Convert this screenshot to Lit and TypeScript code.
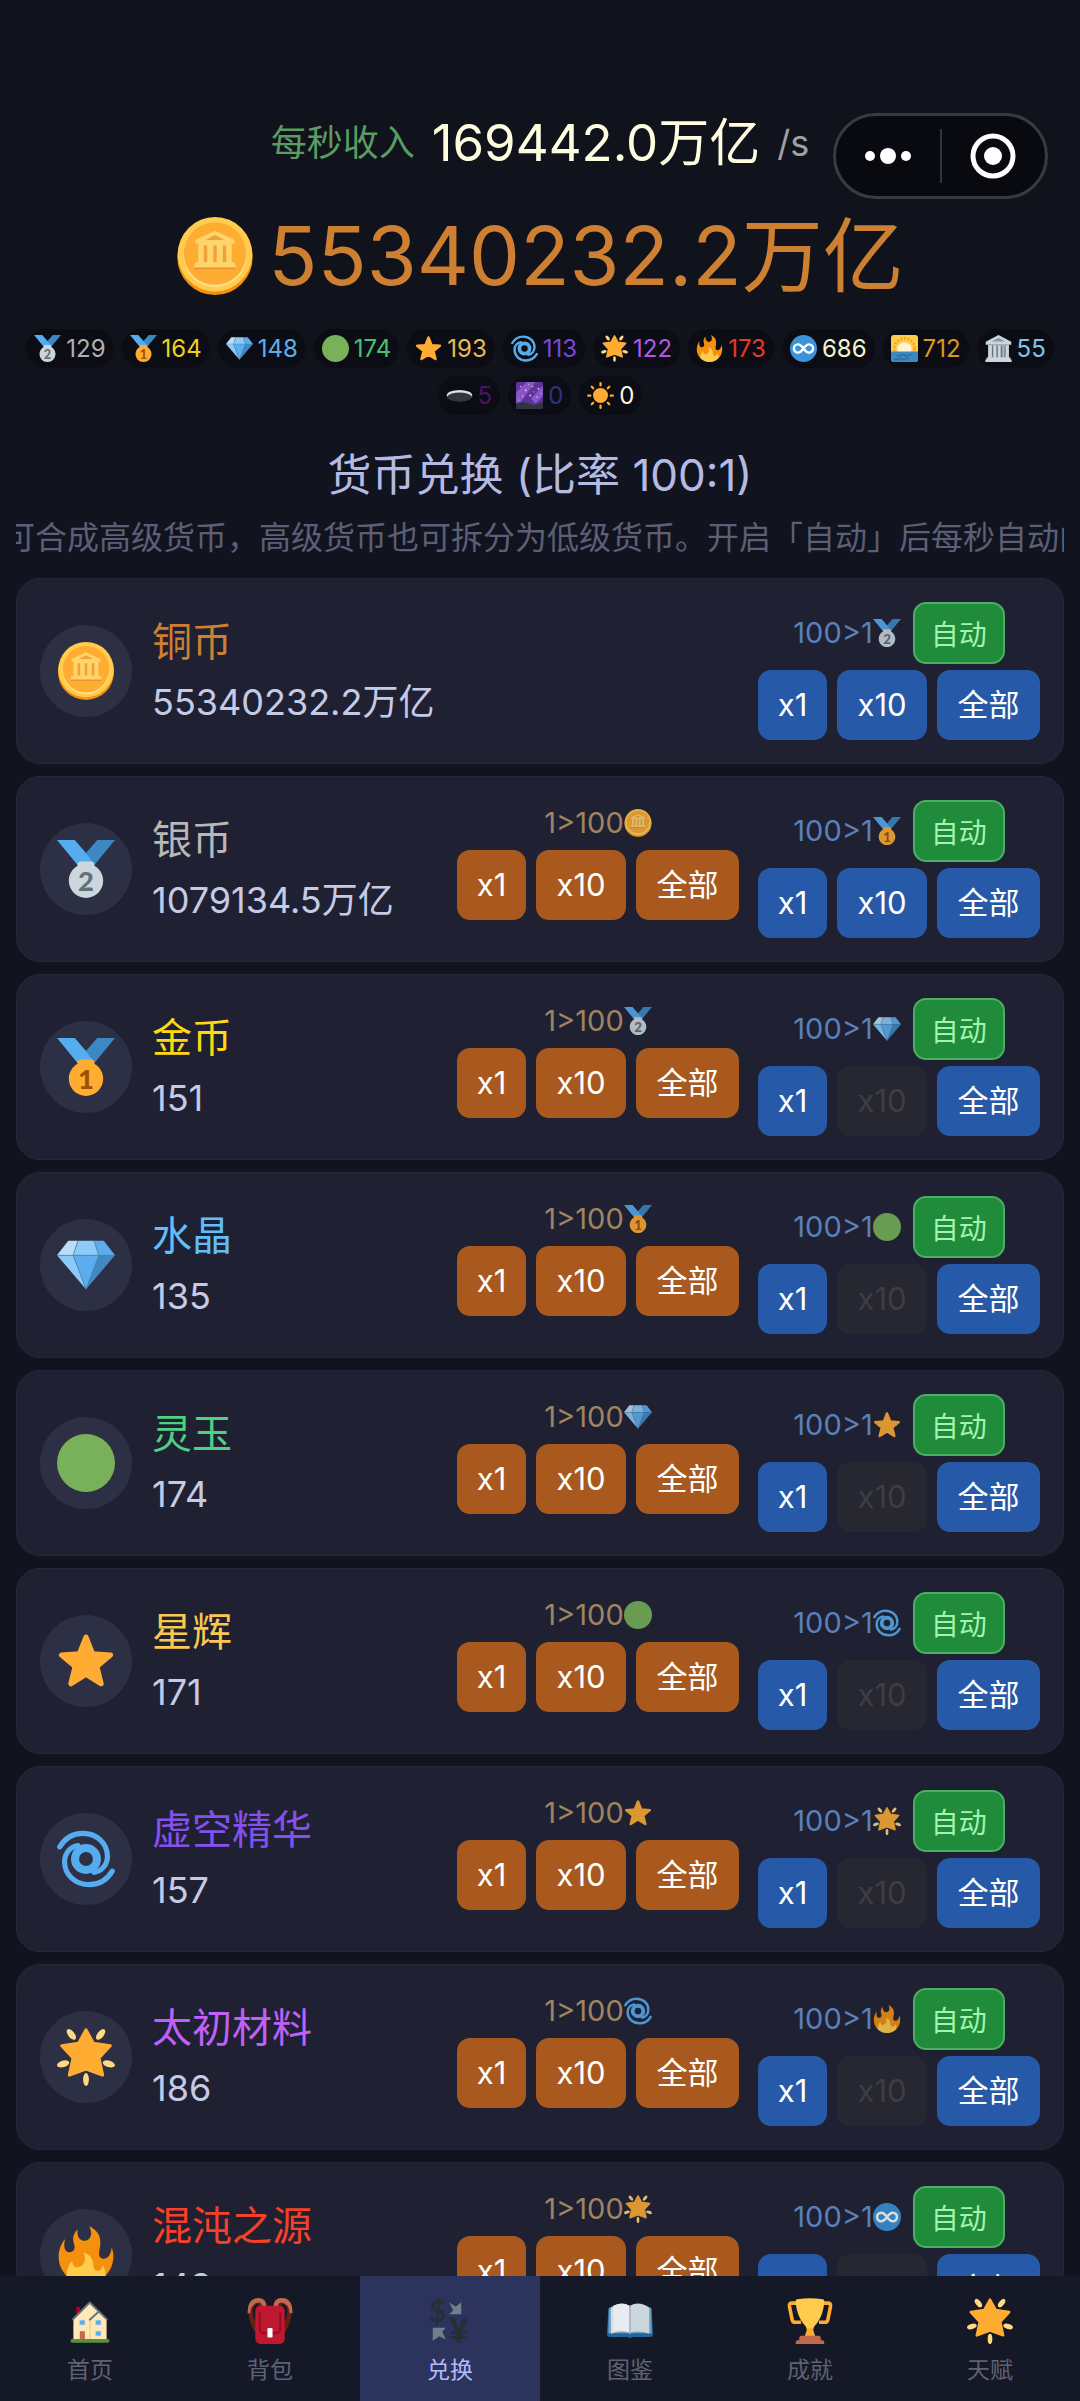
import { LitElement, html, css, svg, nothing, SVGTemplateResult } from 'lit';
import { customElement, property } from 'lit/decorators.js';

interface Currency {
  name: string;
  icon: string;
  color: string;
  amount: string;
  canTen: boolean;
}

const star = 'M18 3.2l4.1 10.3 11.1.8-8.5 7.1 2.7 10.7-9.4-5.9-9.4 5.9 2.7-10.7-8.5-7.1 11.1-.8z';
const ribbon = svg`
  <path fill="#55ACEE" d="M18 8l-7-8H0l14 17 11.521-4.75z"/>
  <path fill="#3B88C3" d="M25 0l-7 8 5.39 7.312 1.227-1.489L36 0z"/>`;
const medalBody =
  'M23.205 16.026c.08-.217.131-.448.131-.693 0-1.104-.896-2-2-2h-6.667c-1.105 0-2 .896-2 2 0 .245.05.476.131.693-3.258 1.826-5.464 5.307-5.464 9.307C7.335 31.224 12.111 36 18.002 36s10.667-4.776 10.667-10.667c0-4-2.206-7.481-5.464-9.307z';
const cycloneArm = 'M1.7 10.5C5 5 10 2.1 16 2.1c9 0 15.3 6.4 15.3 14.2 0 5.200-3.300 9.200-8.300 10';

const icons: Record<string, SVGTemplateResult> = {
  coin: svg`
    <circle cx="18" cy="18.600" r="17.400" fill="#F4900C"/>
    <circle cx="18" cy="17.200" r="17.200" fill="#FFCC4D"/>
    <circle cx="18" cy="17.800" r="14.600" fill="#FFE08A"/>
    <circle cx="18" cy="16.900" r="14.400" fill="#FFAC33"/>
    <path fill="#E8912A" d="M8.500 22.500h19v1.600h-19z"/>
    <path fill="#FFD46B" d="M18 6.300l9 4.200v1.700h-1.300v8.800h1.300l.8 2.300H8.200l.8-2.300h1.300v-8.800H9v-1.700z"/>
    <path fill="#F0A238" d="M18 8.300l4.300 2.300h-8.600zM12.800 13.200h1.600v7.600h-1.600zM17.200 13.200h1.600v7.600h-1.600zM21.600 13.200h1.600v7.600h-1.600z"/>`,
  silver: svg`
    ${ribbon}
    <path fill="#CCD6DD" d="${medalBody}"/>
    <text class="mark" x="18" y="31.500" font-size="17" fill="#627077">2</text>`,
  gold: svg`
    ${ribbon}
    <path fill="#FFAC33" d="${medalBody}"/>
    <text class="mark" x="18" y="31.500" font-size="17" fill="#9E5200">1</text>`,
  gem: svg`
    <path fill="#BDDDF4" d="M13 3H7l-7 9h10z"/>
    <path fill="#5DADEC" d="M36 12l-7-9h-6l3 9z"/>
    <path fill="#4289C1" d="M26 12h10L18 33z"/>
    <path fill="#8CCAF7" d="M10 12H0l18 21zm3-9l-3 9h16l-3-9z"/>
    <path fill="#5DADEC" d="M18 33l-8-21h16z"/>
    <path fill="none" stroke="#4289C1" stroke-width=".5" d="M0 12h36M13 3l-3 9 8 21 8-21-3-9"/>`,
  jade: svg`<circle cx="18" cy="18" r="18" fill="#78B159"/>`,
  star: svg`<path fill="#FFAC33" stroke="#FFAC33" stroke-width="3.200" stroke-linejoin="round" d="${star}"/>`,
  cyclone: svg`
    <g fill="none" stroke="#55ACEE">
      <circle cx="18" cy="18" r="6.800" stroke-width="5"/>
      <path stroke-width="3.200" stroke-linecap="round" d="${cycloneArm}"/>
      <path stroke-width="3.200" stroke-linecap="round" transform="rotate(180 18 18)" d="${cycloneArm}"/>
    </g>`,
  glow: svg`
    <path fill="#FFAC33" stroke="#FFAC33" stroke-width="2" stroke-linejoin="round"
      d="M18 1.200l4.500 8.300 10.500 1.500-7 7.600 2.300 10.600L18 25.500 7.700 29.200 10 18.600 3 11l10.500-1.500z"/>
    <g fill="#FFD983">
      <ellipse cx="8.900" cy="4" rx="2" ry="3.900" transform="rotate(-38 8.900 4)"/>
      <ellipse cx="27.100" cy="4" rx="2" ry="3.900" transform="rotate(38 27.100 4)"/>
      <ellipse cx="3.800" cy="22.300" rx="3.900" ry="2" transform="rotate(-16 3.800 22.300)"/>
      <ellipse cx="32.200" cy="22.300" rx="3.900" ry="2" transform="rotate(16 32.200 22.300)"/>
      <ellipse cx="18" cy="32" rx="1.800" ry="4"/>
    </g>`,
  fire: svg`
    <path fill="#F4900C" d="M35 19c0-2.062-.367-4.039-1.040-5.868-.46 5.389-3.333 8.157-6.335 6.868-2.812-1.208-.917-5.917-.777-8.164.236-3.809-.012-8.169-6.931-11.794 2.875 5.500.333 8.917-2.333 9.125-2.958.231-5.667-2.542-4.667-7.042-3.238 2.386-3.332 6.402-2.333 9 1.042 2.708-.042 4.958-2.583 5.208-2.840.280-4.418-3.041-2.963-8.333C2.520 10.965 1 14.805 1 19c0 9.389 7.611 17 17 17s17-7.611 17-17z"/>
    <path fill="#FFCC4D" d="M28.394 23.999c.148 3.084-2.561 4.293-4.019 3.709-2.106-.843-1.541-2.291-2.083-5.291s-2.625-5.083-5.708-6c2.250 6.333-1.247 8.667-3.080 9.084-1.872.426-3.753-.001-3.968-4.007C7.352 23.668 6 26.676 6 30c0 .368.023.73.055 1.090C9.125 34.124 13.342 36 18 36s8.875-1.876 11.945-4.910c.032-.360.055-.722.055-1.090 0-2.187-.584-4.236-1.606-6.001z"/>`,
  infinity: svg`
    <circle cx="18" cy="18" r="18" fill="#3B94D9"/>
    <path fill="none" stroke="#fff" stroke-width="3.200" stroke-linecap="round"
      d="M18 18c-2.500-3.500-4.500-5.500-7.300-5.500a5.500 5.500 0 0 0 0 11c2.800 0 4.800-2 7.300-5.500s4.500-5.500 7.300-5.500a5.500 5.500 0 0 1 0 11c-2.800 0-4.800-2-7.300-5.500z"/>`,
  sunrise: svg`
    <rect width="36" height="36" rx="4" fill="#FFCC4D"/>
    <circle cx="18" cy="18" r="13.500" fill="none" stroke="#F4A62A" stroke-width="3.500" stroke-dasharray="2.600 2.200"/>
    <circle cx="18" cy="19" r="9.500" fill="#FFF3D2"/>
    <path fill="#3B88C3" d="M0 22h36v10a4 4 0 0 1-4 4H4a4 4 0 0 1-4-4z"/>
    <path fill="none" stroke="#2A6797" stroke-width="1.500" d="M8 27q2.500 2 5 0t5 0 5 0 5 0M4 32q2.500 2 5 0t5 0 5 0 5 0"/>`,
  temple: svg`
    <path fill="#AAB8C2" d="M4 13h28v18H4z"/>
    <path fill="#66757F" d="M9 14h2v16H9zM15 14h2v16h-2zM21 14h2v16h-2zM26 14h2v16h-2z"/>
    <path fill="#CCD6DD" d="M18 0l17 9v4H1V9zM5 14h4v16H5zM11.500 14h3.500v16h-3.500zM17.500 14h3v16h-3zM27.500 14h4v16h-4zM2 30h32v2.500h1.500V36H.5v-3.500H2z"/>
    <path fill="#8899A6" d="M18 3.500l9 5H9z"/>`,
  hole: svg`
    <ellipse cx="18" cy="18" rx="17" ry="7.500" fill="#DCE4E9"/>
    <path fill="#31373D" d="M1 19.500q5-5.500 17-5.500t17 5.500c-1 4-8 6.500-17 6.500S2 23.500 1 19.500z"/>`,
  galaxy: svg`
    <rect width="36" height="36" rx="2" fill="#5B359A"/>
    <path fill="#8A55C8" d="M0 14L14 0h12L6 27l-6 1zM20 22L36 5v14L26 29z"/>
    <path fill="#30343F" d="M0 29q9-4 18 0t18-3v8a2 2 0 0 1-2 2H2a2 2 0 0 1-2-2z"/>
    <g fill="#E3C8F7">
      <circle cx="6" cy="6" r="1"/><circle cx="13" cy="11" r="1.200"/><circle cx="22" cy="6" r="1"/>
      <circle cx="30" cy="9" r="1.200"/><circle cx="9" cy="19" r="1"/><circle cx="19" cy="18" r="1.200"/>
      <circle cx="28" cy="20" r="1"/><circle cx="17" cy="3" r=".8"/><circle cx="4" cy="24" r=".8"/>
      <circle cx="33" cy="15" r=".8"/><circle cx="24" cy="13" r=".8"/>
    </g>`,
  sun: svg`
    <circle cx="18" cy="18" r="10" fill="#FFAC33"/>
    <path stroke="#FFAC33" stroke-width="3" stroke-linecap="round"
      d="M18 1.500v3M18 31.500v3M1.500 18h3M31.500 18h3M6.300 6.300l2 2M27.700 27.700l2 2M6.300 29.700l2-2M27.700 8.300l2-2"/>`,
  home: svg`
    <path fill="#A0041E" d="M7 7h3.200v8H7z"/>
    <path fill="#FFE8B6" d="M5 17L17.800 4 31 17v16H5z"/>
    <path fill="#F3D28E" d="M17.500 17h1.200v15h-1.200z"/>
    <path fill="none" stroke="#66757F" stroke-width="1.500" stroke-linecap="round" stroke-linejoin="round" d="M4.600 16.700L17.800 3.500 31.200 16.700M24.500 11l-6.700 6"/>
    <path fill="#55ACEE" stroke="#9CC9E8" stroke-width=".5" d="M10 17.500h4v3.500h-4zM22.500 17.500h4v3.500h-4zM22.500 26h4v3.500h-4z"/>
    <path fill="#C1694F" d="M10 26h4v6.500h-4z"/>
    <rect x="2.700" y="32" width="30.600" height="3" rx="1.500" fill="#5C913B"/>`,
  bag: svg`
    <path fill="#662113" d="M1 8q0-6 6-7.500L12 4 9 30Q1 22 1 8zM35 8q0-6-6-7.500L24 4l3 26q8-8 8-22z"/>
    <path fill="#151826" d="M4.500 10Q5 5 9 4.500L8 20Q4.500 16 4.500 10zM31.500 10Q31 5 27 4.500L28 20q3.500-4 3.500-10z"/>
    <path fill="#C1694F" d="M.5 12Q0 0 9 0q6 0 6.500 7H12Q11.500 3.500 9 3.500 3.500 4 2.500 12zM35.500 12Q36 0 27 0q-6 0-6.500 7H24q.5-3.500 3-3.500 5.500.5 6.500 8.500z"/>
    <rect x="6.500" y="6" width="23" height="30" rx="4" fill="#BE1931"/>
    <path fill="none" stroke="#9A0A23" stroke-width="1.500" d="M10 11v13q0 3.500 3.500 3.500h9q3.500 0 3.500-3.500V11"/>
    <rect x="16" y="23.500" width="4" height="7.500" rx="1" fill="#fff"/>`,
  exchange: svg`
    <text class="mark" x="8.500" y="18.500" font-size="23" fill="#272E36">$</text>
    <text class="mark" x="25" y="35.500" font-size="28" fill="#272E36">¥</text>
    <path fill="#6F7F8B" d="M17.300 3.400l5.100 3.400 4.400-3.400v9.400h-9.500l3.300-3.200zM4.500 23.200h10.100L12 26.500l2.600 6L9.700 30l-5.200 3.400z"/>`,
  book: svg`
    <path fill="#226699" d="M1 9q0-2 2-2h30q2 0 2 2l1 19q0 2.500-2.500 2.500H20l-2 1-2-1H2.500Q0 30.500 0 28z"/>
    <path fill="#6FA0C4" d="M1.500 8h33l.5 19.500H1z"/>
    <path fill="#D5DEE5" d="M3 7.500Q11 2 17.500 6v21Q10 25 3 28z"/>
    <path fill="#E6ECF1" d="M5 6Q12 3 17.500 6v21Q10 24 5 26z"/>
    <path fill="#CCD6DD" d="M33 7.500Q25 2 18 6v21Q26 25 33 28z"/>
    <path fill="#AAB8C2" d="M17.500 6h1.200v22h-1.200z"/>`,
  trophy: svg`
    <path fill="none" stroke="#FFAC33" stroke-width="2.800" stroke-linejoin="round" d="M10 4H3.500Q1.500 4 2 7l2 10q.5 2 2.500 2H11M26 4h6.500q2 0 1.500 3l-2 10q-.5 2-2.500 2H25"/>
    <path fill="#FFAC33" d="M14 20h8l-1.500 5 1.800 5.500h-8.600l1.800-5.500z"/>
    <path fill="#FFCC4D" d="M8 1q10-1.500 20 0 1.500 0 1.200 2c-.6 9-4.200 16-8.200 19.500-2 1.800-4 1.800-6 0C11 19 7.400 12 6.800 3 6.700 1 8 1 8 1z"/>
    <path fill="#C1694F" d="M11 29.500h14q1.500 0 1.500 3.500H28q1.200 0 1.200 3H6.800q0-3 1.200-3h1.500q0-3.500 1.500-3.500z"/>`,
};

const icon = (name: string) => html`<svg class="icon" viewBox="0 0 36 36" aria-hidden="true">${icons[name]}</svg>`;

const iconStyles = css`
  .icon {
    display: block;
    flex: none;
    overflow: visible;
  }
  .mark {
    font-family: Lato, sans-serif;
    font-weight: 900;
    text-anchor: middle;
  }
`;

const currencies: Currency[] = [
  { name: '铜币', icon: 'coin', color: '#cd7f32', amount: '55340232.2万亿', canTen: true },
  { name: '银币', icon: 'silver', color: '#b8b8b8', amount: '1079134.5万亿', canTen: true },
  { name: '金币', icon: 'gold', color: '#ffd814', amount: '151', canTen: false },
  { name: '水晶', icon: 'gem', color: '#62bef8', amount: '135', canTen: false },
  { name: '灵玉', icon: 'jade', color: '#50d080', amount: '174', canTen: false },
  { name: '星辉', icon: 'star', color: '#f8c850', amount: '171', canTen: false },
  { name: '虚空精华', icon: 'cyclone', color: '#8450ee', amount: '157', canTen: false },
  { name: '太初材料', icon: 'glow', color: '#c060f8', amount: '186', canTen: false },
  { name: '混沌之源', icon: 'fire', color: '#f84028', amount: '149', canTen: false },
  { name: '无限', icon: 'infinity', color: '#f8f8d8', amount: '686', canTen: false },
];

const wallet = [
  { icon: 'silver', color: '#b0b0b4', count: 129 },
  { icon: 'gold', color: '#ecd01c', count: 164 },
  { icon: 'gem', color: '#5cb0e8', count: 148 },
  { icon: 'jade', color: '#48c070', count: 174 },
  { icon: 'star', color: '#e8bc50', count: 193 },
  { icon: 'cyclone', color: '#7848dc', count: 113 },
  { icon: 'glow', color: '#b058e8', count: 122 },
  { icon: 'fire', color: '#e83828', count: 173 },
  { icon: 'infinity', color: '#f4f4cc', count: 686 },
  { icon: 'sunrise', color: '#dc9820', count: 712 },
  { icon: 'temple', color: '#80c4ec', count: 55 },
  { icon: 'hole', color: '#4c1268', count: 5 },
  { icon: 'galaxy', color: '#283488', count: 0 },
  { icon: 'sun', color: '#fcf8e4', count: 0 },
];

const tabs = [
  { icon: 'home', label: '首页' },
  { icon: 'bag', label: '背包' },
  { icon: 'exchange', label: '兑换' },
  { icon: 'book', label: '图鉴' },
  { icon: 'trophy', label: '成就' },
  { icon: 'glow', label: '天赋' },
];

@customElement('exchange-card')
export class ExchangeCard extends LitElement {
  @property({ attribute: false }) currency!: Currency;
  @property() lower = '';
  @property() upper = '';

  static styles = [
    iconStyles,
    css`
      :host {
        display: block;
        flex: none;
      }
      .card {
        display: flex;
        align-items: center;
        padding: 23px;
        background: #1f2132;
        border: 1px solid #26283a;
        border-radius: 24px;
      }
      .avatar {
        display: flex;
        align-items: center;
        justify-content: center;
        flex: none;
        width: 92px;
        height: 92px;
        margin-right: 20px;
        border-radius: 50%;
        background: #2d3044;
      }
      .avatar .icon {
        width: 58px;
        height: 58px;
      }
      .info {
        flex: 1;
        min-width: 0;
      }
      .name {
        margin: 0 0 6px;
        font-size: 40px;
        line-height: 56px;
        font-weight: 400;
      }
      .amount {
        font-size: 36px;
        line-height: 52px;
        color: #c5cae6;
        white-space: nowrap;
      }
      .trade {
        flex: none;
        margin-left: 19px;
      }
      .down {
        align-self: flex-start;
        padding-top: 4px;
      }
      .rate {
        display: flex;
        align-items: center;
        justify-content: center;
        font-size: 29px;
        line-height: 38px;
      }
      .rate .icon {
        width: 28px;
        height: 28px;
        opacity: 0.85;
      }
      .down .rate {
        margin-bottom: 8px;
        color: #a08462;
      }
      .up .rate {
        margin-bottom: 6px;
        color: #5a80bc;
      }
      .buttons {
        display: grid;
        grid-template-columns: 69px 90px 103px;
        gap: 10px;
      }
      button {
        margin: 0;
        padding: 0;
        border: 0;
        font-family: inherit;
        cursor: pointer;
      }
      .buttons button {
        height: 70px;
        border-radius: 13px;
        font-size: 31px;
        line-height: 40px;
        color: #fff;
        background: #2659a8;
      }
      .down .buttons button {
        background: #a9591d;
      }
      .buttons button:disabled {
        background: #262730;
        color: #3c3d46;
        cursor: default;
      }
      .auto {
        width: 92px;
        height: 62px;
        margin-left: 12px;
        border: 2px solid #48b060;
        border-radius: 13px;
        font-size: 28px;
        color: #a4f4b0;
        background: #1f8b3b;
      }
    `,
  ];

  render() {
    const { name, icon: image, color, amount, canTen } = this.currency;
    return html`
      <article class="card">
        <div class="avatar">${icon(image)}</div>
        <div class="info">
          <h2 class="name" style="color: ${color}">${name}</h2>
          <div class="amount">${amount}</div>
        </div>
        ${this.lower
          ? html`
              <div class="trade down">
                <div class="rate">1&gt;100${icon(this.lower)}</div>
                <div class="buttons">
                  <button>x1</button>
                  <button>x10</button>
                  <button>全部</button>
                </div>
              </div>
            `
          : nothing}
        <div class="trade up">
          <div class="rate">
            100&gt;1${icon(this.upper)}
            <button class="auto" aria-pressed="true">自动</button>
          </div>
          <div class="buttons">
            <button>x1</button>
            <button ?disabled=${!canTen}>x10</button>
            <button>全部</button>
          </div>
        </div>
      </article>
    `;
  }
}

@customElement('app-root')
export class AppRoot extends LitElement {
  static styles = [
    iconStyles,
    css`
      :host {
        display: flex;
        flex-direction: column;
        position: relative;
        height: 100vh;
        overflow: hidden;
        background: #11141f;
        color: #c5cae6;
        font-family: Inter, "Noto Sans CJK SC", sans-serif;
      }
      header {
        flex: none;
        padding: 107px 16px 12px;
        background: #10121c;
      }
      .income {
        display: flex;
        align-items: center;
        justify-content: center;
        gap: 17px;
        line-height: 72px;
      }
      .income-label {
        font-size: 36px;
        color: #5a9c62;
      }
      .income-value {
        font-size: 51px;
        color: #fffde0;
      }
      .income-unit {
        font-size: 36px;
        color: #a0a0a4;
      }
      .money {
        display: flex;
        align-items: center;
        justify-content: center;
        gap: 14px;
        margin: 27px 0 23px;
        font-size: 81px;
        line-height: 100px;
        color: #cd7f32;
      }
      .money .icon {
        width: 78px;
        height: 78px;
      }
      .wallet {
        display: flex;
        flex-wrap: wrap;
        justify-content: center;
        gap: 8px;
        margin: 0;
        padding: 0;
        list-style: none;
      }
      .chip {
        display: flex;
        align-items: center;
        gap: 5px;
        padding: 0 8px;
        border-radius: 20px;
        background: #0b0c14;
        font-size: 24px;
        line-height: 39px;
      }
      .chip .icon {
        width: 27px;
        height: 27px;
      }
      .capsule {
        position: absolute;
        top: 113px;
        right: 32px;
        display: flex;
        align-items: center;
        box-sizing: border-box;
        width: 215px;
        height: 86px;
        border: 3px solid #3a3b42;
        border-radius: 43px;
        background: #090a10;
      }
      .capsule button {
        display: flex;
        align-items: center;
        justify-content: center;
        flex: 1;
        height: 54px;
        margin: 0;
        padding: 0;
        border: 0;
        background: none;
      }
      .capsule button + button {
        border-left: 2px solid #33343b;
      }
      main {
        display: flex;
        flex-direction: column;
        flex: 1;
        min-height: 0;
        overflow: hidden;
        padding: 18px 16px 0;
      }
      h1 {
        flex: none;
        margin: 0 0 11px;
        font-size: 44px;
        line-height: 60px;
        font-weight: 400;
        text-align: center;
        color: #b4bae4;
      }
      .marquee {
        flex: none;
        margin: 0 0 18px;
        overflow: hidden;
        white-space: nowrap;
        text-indent: -141px;
        font-size: 32px;
        line-height: 44px;
        color: #5c5f76;
      }
      .list {
        display: flex;
        flex-direction: column;
        gap: 12px;
      }
      nav {
        display: grid;
        grid-template-columns: repeat(6, 1fr);
        flex: none;
        position: relative;
        background: #151826;
      }
      .tab {
        display: flex;
        flex-direction: column;
        align-items: center;
        gap: 10px;
        padding: 22px 0 14px;
        font-size: 23px;
        line-height: 33px;
        color: #5f6272;
        text-decoration: none;
      }
      .tab .icon {
        width: 46px;
        height: 46px;
      }
      .tab[aria-current] {
        background: #2c345e;
        color: #b2bcfa;
      }
    `,
  ];

  render() {
    return html`
      <header>
        <div class="income">
          <span class="income-label">每秒收入</span>
          <span class="income-value">169442.0万亿</span>
          <span class="income-unit">/s</span>
        </div>
        <div class="money">${icon('coin')}<span>55340232.2万亿</span></div>
        <ul class="wallet">
          ${wallet.map(
            (item) => html`<li class="chip" style="color: ${item.color}">${icon(item.icon)}${item.count}</li>`
          )}
        </ul>
      </header>
      <div class="capsule">
        <button aria-label="更多">
          <svg width="48" height="20" viewBox="0 0 48 20" fill="#fff">
            <circle cx="6" cy="10" r="5"/>
            <circle cx="24" cy="10" r="8"/>
            <circle cx="42" cy="10" r="5"/>
          </svg>
        </button>
        <button aria-label="关闭">
          <svg width="46" height="46" viewBox="0 0 46 46">
            <circle cx="23" cy="23" r="20" fill="none" stroke="#fff" stroke-width="5"/>
            <circle cx="23" cy="23" r="9" fill="#fff"/>
          </svg>
        </button>
      </div>
      <main>
        <h1>货币兑换 (比率 100:1)</h1>
        <p class="marquee">低级货币可合成高级货币，高级货币也可拆分为低级货币。开启「自动」后每秒自动向上兑换</p>
        <div class="list">
          ${currencies.slice(0, -1).map(
            (currency, i) => html`
              <exchange-card
                .currency=${currency}
                .lower=${currencies[i - 1]?.icon ?? ''}
                .upper=${currencies[i + 1].icon}
              ></exchange-card>
            `
          )}
        </div>
      </main>
      <nav>
        ${tabs.map(
          (tab) => html`
            <a class="tab" href="#${tab.icon}" aria-current=${tab.icon === 'exchange' ? 'page' : nothing}>
              ${icon(tab.icon)}<span>${tab.label}</span>
            </a>
          `
        )}
      </nav>
    `;
  }
}
